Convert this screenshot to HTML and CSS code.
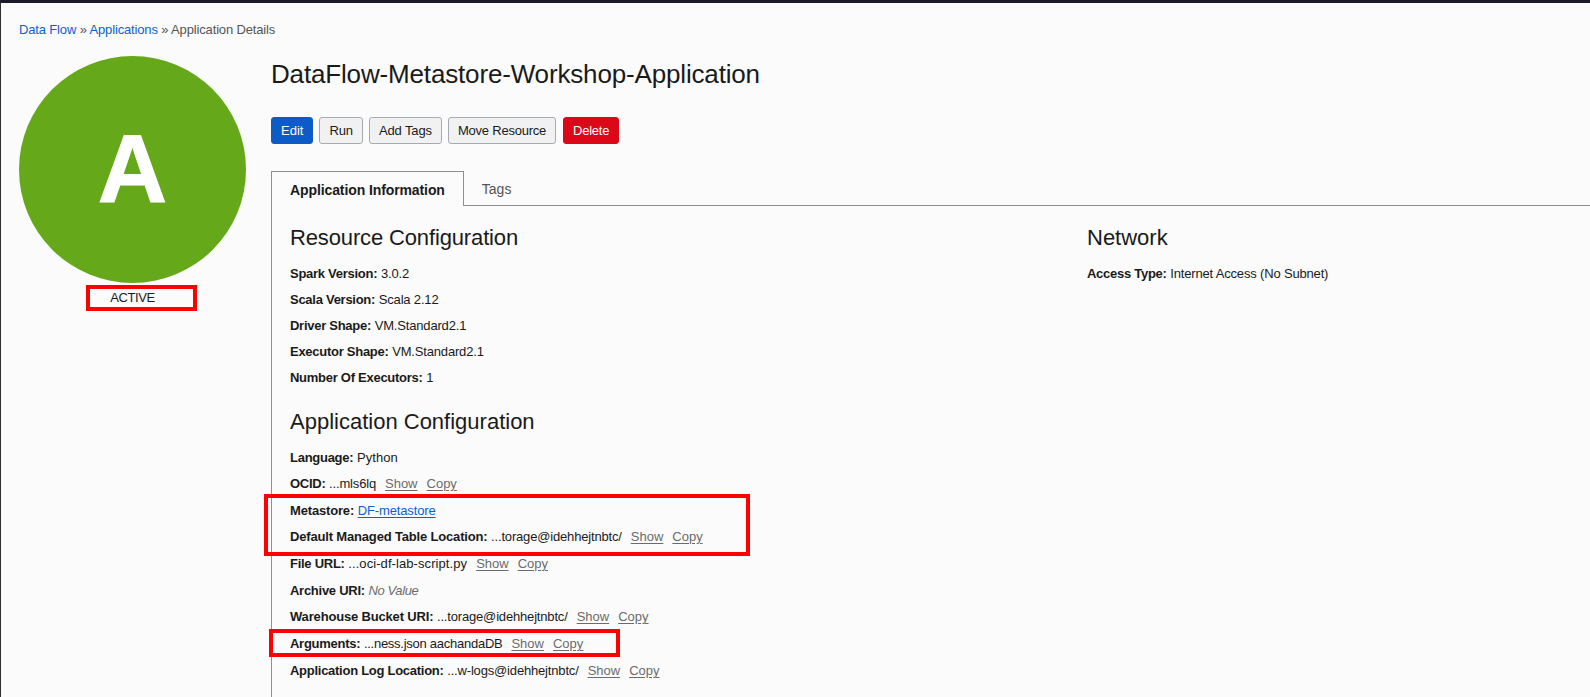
FILE: index.html
```html
<!DOCTYPE html>
<html lang="en">
<head>
<meta charset="utf-8">
<title>Application Details</title>
<link rel="stylesheet" href="styles.css">
</head>
<body>
<div class="page">
  <nav class="breadcrumb"><a href="#">Data Flow</a> » <a href="#">Applications</a> » <span>Application Details</span></nav>
  <div class="layout">
    <aside class="status">
      <div class="badge">A</div>
      <div class="state">ACTIVE</div>
      <div class="mark mark-state"></div>
    </aside>
    <main class="main">
      <h1>DataFlow-Metastore-Workshop-Application</h1>
      <div class="actions">
        <button class="btn primary">Edit</button>
        <button class="btn">Run</button>
        <button class="btn">Add Tags</button>
        <button class="btn move">Move Resource</button>
        <button class="btn danger">Delete</button>
      </div>
      <div class="tabs">
        <div class="tab active">Application Information</div>
        <div class="tab">Tags</div>
        <div class="tab-rule"></div>
      </div>
      <div class="panel">
        <section class="column">
          <h2 class="snug">Resource Configuration</h2>
          <div class="rows">
            <div class="row"><b>Spark Version:</b> <span>3.0.2</span></div>
            <div class="row"><b>Scala Version:</b> <span>Scala 2.12</span></div>
            <div class="row"><b>Driver Shape:</b> <span>VM.Standard2.1</span></div>
            <div class="row"><b>Executor Shape:</b> <span>VM.Standard2.1</span></div>
            <div class="row"><b>Number Of Executors:</b> <span>1</span></div>
          </div>
          <h2 class="second">Application Configuration</h2>
          <div class="rows loose">
            <div class="row"><b>Language:</b> <span class="wide">Python</span></div>
            <div class="row"><b>OCID:</b> <span>...mls6lq</span><a href="#">Show</a><a href="#">Copy</a></div>
            <div class="row"><b class="wide">Metastore:</b> <a class="link" href="#">DF-metastore</a></div>
            <div class="row"><b class="wide">Default Managed Table Location:</b> <span>...torage@idehhejtnbtc/</span><a href="#">Show</a><a href="#">Copy</a></div>
            <div class="row"><b>File URL:</b> <span class="wide">...oci-df-lab-script.py</span><a href="#">Show</a><a href="#">Copy</a></div>
            <div class="row"><b>Archive URI:</b> <i>No Value</i></div>
            <div class="row"><b class="wide">Warehouse Bucket URI:</b> <span>...torage@idehhejtnbtc/</span><a href="#">Show</a><a href="#">Copy</a></div>
            <div class="row"><b>Arguments:</b> <span class="tight">...ness.json aachandaDB</span><a href="#">Show</a><a href="#">Copy</a></div>
            <div class="row"><b>Application Log Location:</b> <span>...w-logs@idehhejtnbtc/</span><a href="#">Show</a><a href="#">Copy</a></div>
          </div>
        </section>
        <section class="column">
          <h2>Network</h2>
          <div class="rows">
            <div class="row"><b>Access Type:</b> <span>Internet Access (No Subnet)</span></div>
          </div>
        </section>
        <div class="mark mark-metastore"></div>
        <div class="mark mark-arguments"></div>
      </div>
    </main>
  </div>
</div>
</body>
</html>
```
FILE: styles.css
```css
* { box-sizing: border-box; }
body {
  margin: 0;
  background: #fbfbfb;
  color: #1a1a1a;
  font: 13px/18px "Liberation Sans", Arial, sans-serif;
}
.page {
  height: 697px;
  overflow: hidden;
  border-top: 3px solid #171c26;
  border-left: 1px solid #2e2e30;
  padding: 18px 0 0 18px;
}
.breadcrumb { color: #555; white-space: nowrap; letter-spacing: -0.15px; }
.breadcrumb a { color: #0b5fce; text-decoration: none; }
.layout { display: flex; margin-top: 17px; }
.status { position: relative; width: 227px; flex: none; margin-right: 25px; }
.badge {
  height: 227px;
  border-radius: 50%;
  background: #65a91b;
  color: #fff;
  font-size: 96px;
  font-weight: bold;
  line-height: 225px;
  text-align: center;
  -webkit-text-stroke: 1px #fff;
}
.state { margin-top: 6px; text-align: center; letter-spacing: -0.45px; }
.main { flex: 1; min-width: 0; }
h1, h2 { margin: 0; font-weight: normal; white-space: nowrap; }
h1 { font-size: 26px; line-height: 36px; letter-spacing: -0.16px; }
.actions { display: flex; gap: 6px; margin-top: 25px; }
.btn {
  height: 27px;
  padding: 0 9px;
  border: 1px solid #a5abb5;
  border-radius: 3px;
  background: #f1f1f1;
  color: #1a1a1a;
  font: inherit;
  letter-spacing: -0.12px;
  white-space: nowrap;
}
.btn.move { letter-spacing: -0.22px; }
.btn.primary { background: #0d5bc6; border-color: #0d5bc6; color: #fff; letter-spacing: 0; }
.btn.danger { background: #dc0718; border-color: #dc0718; color: #fff; margin-left: 1px; letter-spacing: -0.25px; }
.tabs { display: flex; margin-top: 27px; height: 35px; }
.tab {
  padding: 0 18px;
  border-bottom: 1px solid #8f8f8f;
  color: #555;
  font-size: 14px;
  line-height: 36px;
  white-space: nowrap;
}
.tab.active {
  border: 1px solid #8f8f8f;
  border-bottom: 0;
  color: #1a1a1a;
  font-weight: bold;
  letter-spacing: -0.1px;
}
.tab-rule { flex: 1; border-bottom: 1px solid #8f8f8f; }
.panel {
  position: relative;
  display: grid;
  grid-template-columns: 797px 1fr;
  height: 500px;
  padding: 18px 0 0 18px;
  border-left: 1px solid #8f8f8f;
}
h2 { font-size: 22px; line-height: 28px; }
h2.snug { letter-spacing: -0.14px; }
h2.second { margin-top: 17px; }
.rows { margin-top: 9px; display: grid; grid-auto-rows: 26px; }
.rows.loose { grid-template-rows: 26px 27px 26px 27px 27px 26px 27px 27px 26px; }
.row { line-height: 26px; white-space: nowrap; }
.row b { letter-spacing: -0.27px; }
.row b.wide { letter-spacing: -0.17px; }
.row span { letter-spacing: -0.17px; }
.row span.tight { letter-spacing: -0.26px; }
.row span.wide { letter-spacing: 0.08px; }
.row a { color: #6b6b6b; margin-left: 9px; text-underline-offset: 2px; }
.row a.link { color: #0b5fce; margin-left: 0; letter-spacing: -0.13px; }
.row i { color: #6b6b6b; letter-spacing: -0.37px; }
.mark { position: absolute; border: 4px solid #fe0000; }
.mark-state { left: 67px; top: 229px; width: 111px; height: 26px; }
.mark-metastore { left: -8px; top: 288px; width: 486px; height: 62px; }
.mark-arguments { left: -3px; top: 423px; width: 351px; height: 28px; }
```
